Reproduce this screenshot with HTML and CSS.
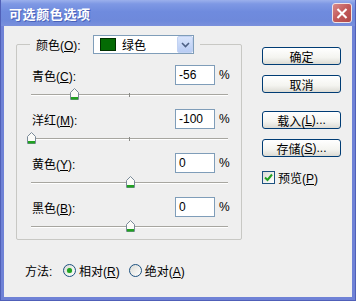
FILE: index.html
```html
<!DOCTYPE html>
<html>
<head>
<meta charset="utf-8">
<link rel="stylesheet" href="styles.css">
</head>
<body>
<div class="window">
  <div class="titlebar">
    <span class="title">可选颜色选项</span>
    <div class="close">
      <svg width="19" height="19" viewBox="0 0 19 19"><path d="M5.5 5.5 L13.5 13.5 M13.5 5.5 L5.5 13.5" stroke="#fff" stroke-width="2.2" stroke-linecap="square"/></svg>
    </div>
  </div>
  <div class="client">
    <div class="leftcol">
      <div class="group">
        <div class="legend">
          <span class="legend-label">颜色(<u>O</u>):</span>
          <div class="select">
            <span class="swatch"></span>
            <span class="select-text">绿色</span>
            <span class="select-btn">
              <svg width="9" height="6" viewBox="0 0 9 6"><path d="M1 1 L4.5 4.5 L8 1" fill="none" stroke="#4d6185" stroke-width="1.6"/></svg>
            </span>
          </div>
        </div>
        <div class="rows">
          <div class="item">
            <div class="row"><span class="lbl">青色(<u>C</u>):</span><span class="input">-56</span><span class="pct">%</span></div>
            <div class="slider"><span class="track"></span><span class="tick"></span><span class="thumb" style="left: 22%"><svg width="9" height="12" viewBox="0 0 9 12"><path d="M0.5 4.5 L4.5 0.5 L8.5 4.5 L8.5 11.5 L0.5 11.5 Z" fill="#fbfbf8" stroke="#7a8a99"/><rect x="1" y="9" width="7" height="2.5" fill="#21a121"/></svg></span></div>
          </div>
          <div class="item">
            <div class="row"><span class="lbl">洋红(<u>M</u>):</span><span class="input">-100</span><span class="pct">%</span></div>
            <div class="slider"><span class="track"></span><span class="tick"></span><span class="thumb" style="left: 0%"><svg width="9" height="12" viewBox="0 0 9 12"><path d="M0.5 4.5 L4.5 0.5 L8.5 4.5 L8.5 11.5 L0.5 11.5 Z" fill="#fbfbf8" stroke="#7a8a99"/><rect x="1" y="9" width="7" height="2.5" fill="#21a121"/></svg></span></div>
          </div>
          <div class="item">
            <div class="row"><span class="lbl">黄色(<u>Y</u>):</span><span class="input">0</span><span class="pct">%</span></div>
            <div class="slider"><span class="track"></span><span class="tick"></span><span class="thumb" style="left: 50%"><svg width="9" height="12" viewBox="0 0 9 12"><path d="M0.5 4.5 L4.5 0.5 L8.5 4.5 L8.5 11.5 L0.5 11.5 Z" fill="#fbfbf8" stroke="#7a8a99"/><rect x="1" y="9" width="7" height="2.5" fill="#21a121"/></svg></span></div>
          </div>
          <div class="item">
            <div class="row"><span class="lbl">黑色(<u>B</u>):</span><span class="input">0</span><span class="pct">%</span></div>
            <div class="slider"><span class="track"></span><span class="tick"></span><span class="thumb" style="left: 50%"><svg width="9" height="12" viewBox="0 0 9 12"><path d="M0.5 4.5 L4.5 0.5 L8.5 4.5 L8.5 11.5 L0.5 11.5 Z" fill="#fbfbf8" stroke="#7a8a99"/><rect x="1" y="9" width="7" height="2.5" fill="#21a121"/></svg></span></div>
          </div>
        </div>
      </div>
      <div class="method">
        <span class="method-label">方法:</span>
        <span class="radio checked"><span class="dot"></span></span>
        <span class="radio-text">相对(<u>R</u>)</span>
        <span class="radio"></span>
        <span class="radio-text">绝对(<u>A</u>)</span>
      </div>
    </div>
    <div class="rightcol">
      <div class="btn">确定</div>
      <div class="btn">取消</div>
      <div class="btn btn-gap">载入(<u>L</u>)...</div>
      <div class="btn">存储(<u>S</u>)...</div>
      <div class="check">
        <span class="checkbox"><svg width="11" height="11" viewBox="0 0 11 11"><path d="M2 5.5 L4.5 8 L9 2.5" fill="none" stroke="#21a121" stroke-width="2"/></svg></span>
        <span class="check-text">预览(<u>P</u>)</span>
      </div>
    </div>
  </div>
</div>
</body>
</html>
```

FILE: styles.css
```css
* { box-sizing: border-box; }
html, body { margin: 0; padding: 0; background: #ffffff; }
body {
  font-family: "Liberation Sans", "Noto Sans CJK SC", sans-serif;
  font-size: 12px;
  color: #000;
}
u { text-decoration: underline; text-underline-offset: 1px; }

.window {
  width: 356px;
  height: 301px;
  background: #6f82d6;
  display: flex;
  flex-direction: column;
  border-left: 1px solid #5060b8;
  border-right: 1px solid #5060b8;
  border-bottom: 1px solid #5060b8;
}
.titlebar {
  height: 26px;
  flex: none;
  display: flex;
  align-items: center;
  justify-content: space-between;
  padding: 0 3px 0 8px;
  background: linear-gradient(#9bb0ec 0%, #7e98e4 15%, #6f8bde 45%, #6e89db 80%, #7a90dc 100%);
}
.title {
  color: #fff;
  font-family: "Noto Sans CJK SC", sans-serif;
  font-weight: bold;
  font-size: 13px;
  text-shadow: 1px 1px 0 #4a62b8;
  letter-spacing: 0.6px;
}
.close {
  width: 20px;
  height: 20px;
  border: 1px solid #f2e4e4;
  border-radius: 3px;
  background: linear-gradient(135deg, #d98a8a 0%, #c25a5a 50%, #b04848 100%);
  display: flex;
  align-items: center;
  justify-content: center;
}
.client {
  flex: 1;
  margin: 0 3px 3px 3px;
  background: #efefef;
  display: flex;
}
.leftcol {
  width: 238px;
  padding: 18px 0 0 12px;
  display: flex;
  flex-direction: column;
}
.group {
  width: 226px;
  height: 196px;
  border: 1px solid #c8c8c4;
  border-radius: 2px;
}
.legend {
  display: flex;
  align-items: center;
  width: fit-content;
  margin: -10px 0 0 13px;
  padding: 0 6px 0 6px;
  background: #efefef;
  height: 19px;
}
.legend-label { width: 57px; }
.select {
  width: 101px;
  height: 19px;
  border: 1px solid #7f9db9;
  background: #fff;
  display: flex;
  align-items: center;
  padding-left: 6px;
}
.swatch {
  width: 16px;
  height: 13px;
  background: #046b04;
  border: 1px solid #003000;
  flex: none;
}
.select-text { margin-left: 6px; flex: 1; }
.select-btn {
  width: 16px;
  height: 17px;
  background: linear-gradient(#d8e4fb, #b8ccf4);
  border: 1px solid #c2d2f2;
  border-radius: 2px;
  display: flex;
  align-items: center;
  justify-content: center;
}
.rows {
  padding: 11px 0 0 14px;
  display: flex;
  flex-direction: column;
}
.item { height: 44px; }
.row {
  height: 20px;
  display: flex;
  align-items: center;
}
.lbl { width: 144px; padding-left: 1px; }
.input {
  width: 40px;
  height: 20px;
  border: 1px solid #7f9db9;
  background: #fff;
  padding-left: 3px;
  line-height: 18px;
}
.pct { margin-left: 4px; }
.slider {
  position: relative;
  width: 197px;
  height: 24px;
}
.track {
  position: absolute;
  left: 0;
  right: 0;
  top: 9px;
  height: 2px;
  border-top: 1px solid #a7a6a0;
  border-bottom: 1px solid #ffffff;
}
.tick {
  position: absolute;
  left: 98px;
  top: 8px;
  width: 1px;
  height: 4px;
  background: #8a8a86;
}
.thumb {
  position: absolute;
  top: 3px;
  width: 9px;
  height: 12px;
  margin-left: -4px;
  line-height: 0;
}
.method {
  display: flex;
  align-items: center;
  height: 16px;
  margin-top: 22px;
  padding-left: 9px;
}
.method-label { width: 38px; }
.radio {
  width: 13px;
  height: 13px;
  border-radius: 50%;
  border: 1px solid #1c5180;
  background: linear-gradient(135deg, #dcdcd6, #ffffff);
  display: flex;
  align-items: center;
  justify-content: center;
  flex: none;
}
.dot {
  width: 5px;
  height: 5px;
  border-radius: 50%;
  background: #21a121;
  box-shadow: 0 0 1px #6fdb6f;
}
.radio-text { margin-left: 3px; margin-right: 9px; }
.rightcol {
  padding: 21px 0 0 20px;
  display: flex;
  flex-direction: column;
}
.btn {
  width: 79px;
  height: 18px;
  border: 1px solid #003c74;
  border-radius: 3px;
  background: linear-gradient(#ffffff, #f4f4f0 60%, #dcdbd4);
  display: flex;
  align-items: center;
  justify-content: center;
  margin-bottom: 10px;
}
.btn-gap { margin-top: 8px; }
.check {
  display: flex;
  align-items: center;
  margin-top: 2px;
}
.checkbox {
  width: 13px;
  height: 13px;
  border: 1px solid #1c5180;
  background: linear-gradient(135deg, #dcdcd6, #ffffff);
  display: flex;
  align-items: center;
  justify-content: center;
}
.check-text { margin-left: 3px; }
```
